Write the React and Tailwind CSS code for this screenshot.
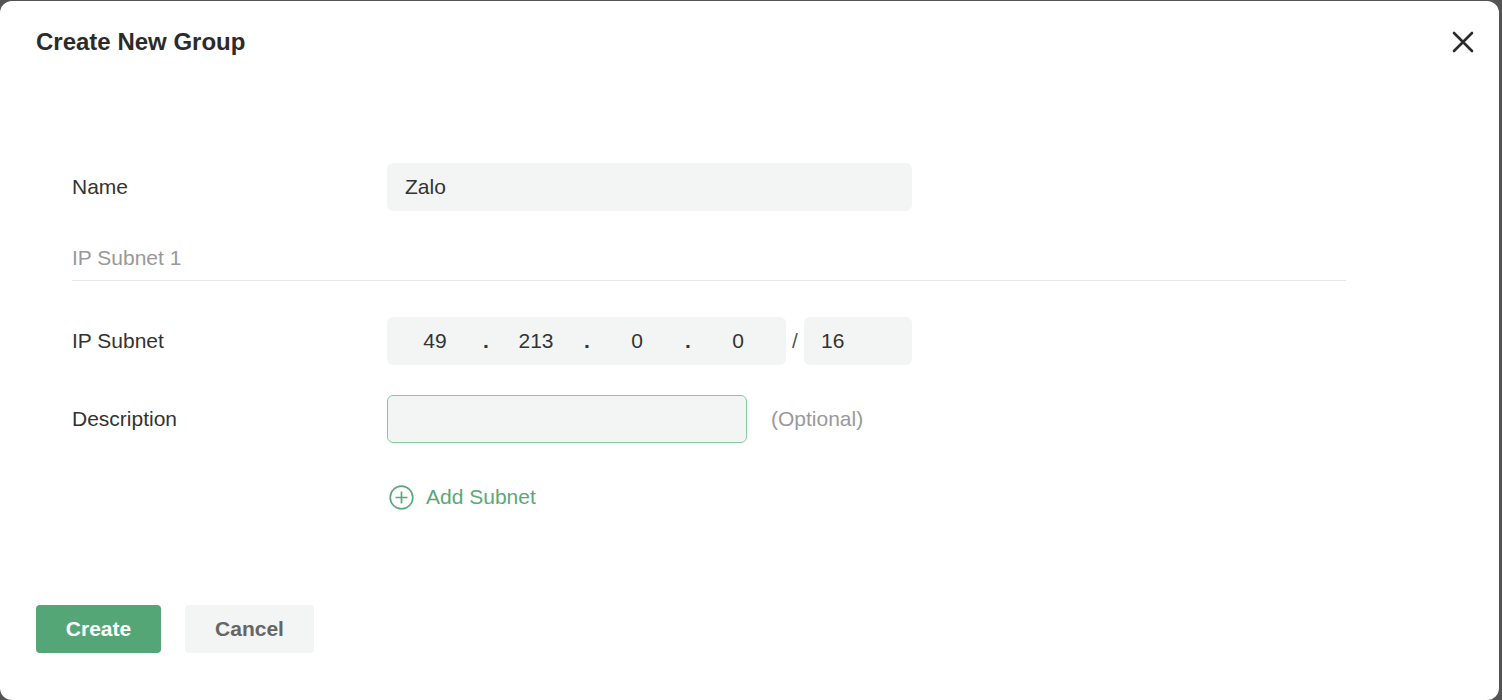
import { useState } from "react";

function CloseIcon() {
  return (
    <svg width="22" height="22" viewBox="0 0 22 22" fill="none">
      <path d="M2 2L20 20M20 2L2 20" stroke="#2b2b2b" strokeWidth="2.6" strokeLinecap="round" />
    </svg>
  );
}

function PlusCircle() {
  return (
    <svg width="25" height="25" viewBox="0 0 25 25" fill="none">
      <circle cx="12.5" cy="12.5" r="11.3" stroke="#5aa87a" strokeWidth="1.7" />
      <path d="M12.5 6.5V18.5M6.5 12.5H18.5" stroke="#5aa87a" strokeWidth="1.7" />
    </svg>
  );
}

function Octet({ value }) {
  return (
    <div className="w-[96px] h-full flex items-center justify-center">{value}</div>
  );
}

function Dot() {
  return <div className="w-[5px] text-center font-bold">.</div>;
}

export default function App() {
  const [name] = useState("Zalo");
  const octets = ["49", "213", "0", "0"];

  return (
    <div
      className="h-[700px] bg-[#545454] pt-px pr-[3px] overflow-hidden"
      style={{ fontFamily: '"Liberation Sans", Arial, sans-serif' }}
    >
      <div className="h-full bg-white rounded-xl flex flex-col text-[21px] text-[#333]">
        {/* Header */}
        <div className="h-[82px] flex items-center justify-between pl-9 pr-[21px]">
          <h1 className="text-[24px] font-bold text-[#2b2b2b]">Create New Group</h1>
          <button className="w-[30px] h-[30px] flex items-center justify-center">
            <CloseIcon />
          </button>
        </div>

        {/* Form */}
        <div className="pl-[72px] w-[1346px] mt-[80px]">
          <div className="flex items-center h-12">
            <div className="w-[315px]">Name</div>
            <div className="w-[525px] h-12 bg-[#f3f5f4] rounded-md flex items-center pl-[18px]">
              {name}
            </div>
          </div>

          <div className="mt-[35px] pb-[10px] border-b border-[#e6e6e6] text-[#999] leading-6">
            IP Subnet 1
          </div>

          <div className="flex items-center h-12 mt-[36px]">
            <div className="w-[315px]">IP Subnet</div>
            <div className="w-[399px] h-12 bg-[#f3f5f4] rounded-md flex items-center">
              {octets.map((o, i) => (
                <div key={i} className="flex items-center h-full">
                  {i > 0 && <Dot />}
                  <Octet value={o} />
                </div>
              ))}
            </div>
            <div className="w-[18px] text-center text-[#555]">/</div>
            <div className="w-[108px] h-12 bg-[#f3f5f4] rounded-md flex items-center pl-[17px]">
              16
            </div>
          </div>

          <div className="flex items-center h-12 mt-[30px]">
            <div className="w-[315px]">Description</div>
            <div className="w-[360px] h-12 bg-[#f3f5f4] rounded-md border border-[#7fd19c]" />
            <div className="ml-6 text-[#999]">(Optional)</div>
          </div>

          <div className="flex items-center h-6 mt-[42px] pl-[315px]">
            <button className="flex items-center gap-3 text-[#5aa87a] pl-[2px]">
              <PlusCircle />
              <span>Add Subnet</span>
            </button>
          </div>
        </div>

        {/* Footer */}
        <div className="flex items-center gap-6 pl-9 mt-[96px]">
          <button className="w-[125px] h-12 rounded bg-[#55a677] text-white font-bold">
            Create
          </button>
          <button className="w-[129px] h-12 rounded bg-[#f3f4f4] text-[#666] font-bold">
            Cancel
          </button>
        </div>
      </div>
    </div>
  );
}
